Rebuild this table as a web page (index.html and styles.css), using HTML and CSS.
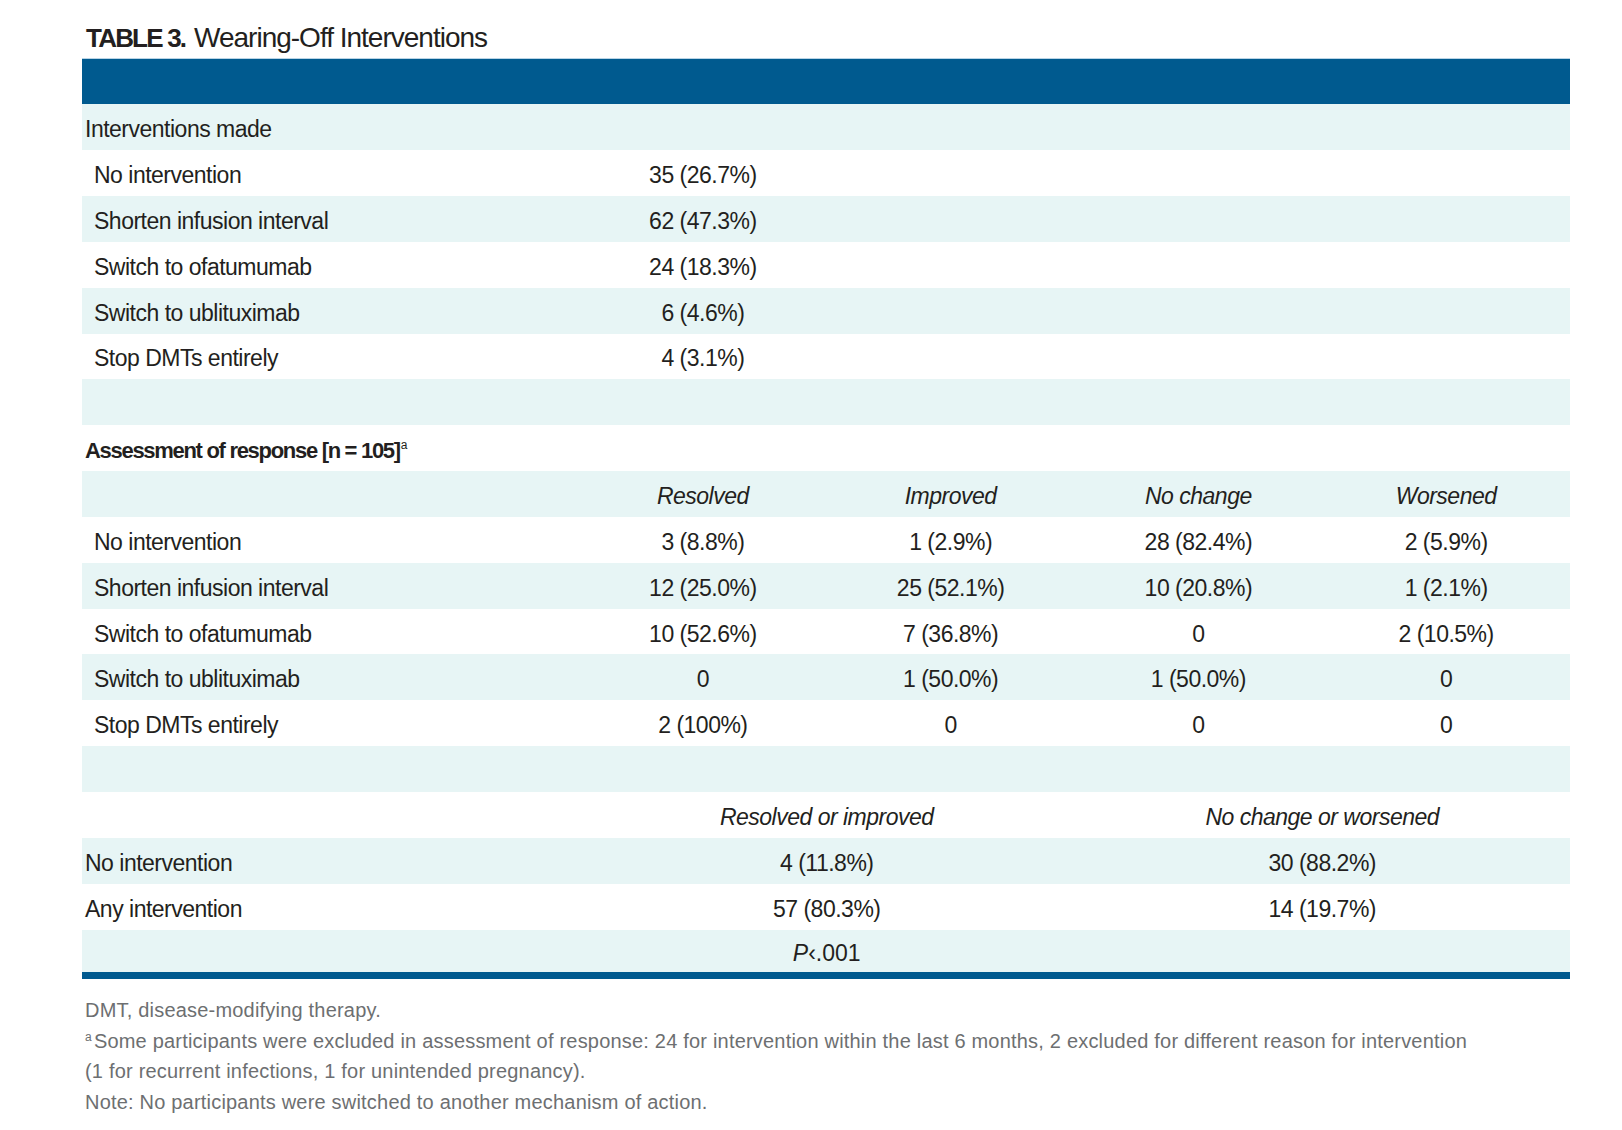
FILE: index.html
```html
<!DOCTYPE html>
<html lang="en">
<head>
<meta charset="utf-8">
<title>Table 3. Wearing-Off Interventions</title>
<link rel="stylesheet" href="styles.css">
</head>
<body>
<div class="page">
  <table class="data">
    <caption class="caption"><b>TABLE 3.</b> Wearing-Off Interventions</caption>
    <colgroup>
      <col class="c-label">
      <col class="c-val">
      <col class="c-val">
      <col class="c-val">
      <col class="c-val">
    </colgroup>
    <thead>
      <tr class="head"><th colspan="5"></th></tr>
    </thead>
    <tbody>
      <tr class="alt"><td class="top" colspan="5">Interventions made</td></tr>
      <tr><td class="sub">No intervention</td><td class="num">35 (26.7%)</td><td colspan="3"></td></tr>
      <tr class="alt"><td class="sub">Shorten infusion interval</td><td class="num">62 (47.3%)</td><td colspan="3"></td></tr>
      <tr><td class="sub">Switch to ofatumumab</td><td class="num">24 (18.3%)</td><td colspan="3"></td></tr>
      <tr class="alt"><td class="sub">Switch to ublituximab</td><td class="num">6 (4.6%)</td><td colspan="3"></td></tr>
      <tr><td class="sub">Stop DMTs entirely</td><td class="num">4 (3.1%)</td><td colspan="3"></td></tr>
      <tr class="alt"><td colspan="5"></td></tr>

      <tr><td class="top section" colspan="5">Assessment of response [n = 105]<sup>a</sup></td></tr>
      <tr class="alt"><td></td><td class="num ital">Resolved</td><td class="num ital">Improved</td><td class="num ital">No change</td><td class="num ital">Worsened</td></tr>
      <tr><td class="sub">No intervention</td><td class="num">3 (8.8%)</td><td class="num">1 (2.9%)</td><td class="num">28 (82.4%)</td><td class="num">2 (5.9%)</td></tr>
      <tr class="alt"><td class="sub">Shorten infusion interval</td><td class="num">12 (25.0%)</td><td class="num">25 (52.1%)</td><td class="num">10 (20.8%)</td><td class="num">1 (2.1%)</td></tr>
      <tr><td class="sub">Switch to ofatumumab</td><td class="num">10 (52.6%)</td><td class="num">7 (36.8%)</td><td class="num">0</td><td class="num">2 (10.5%)</td></tr>
      <tr class="alt"><td class="sub">Switch to ublituximab</td><td class="num">0</td><td class="num">1 (50.0%)</td><td class="num">1 (50.0%)</td><td class="num">0</td></tr>
      <tr><td class="sub">Stop DMTs entirely</td><td class="num">2 (100%)</td><td class="num">0</td><td class="num">0</td><td class="num">0</td></tr>
      <tr class="alt"><td colspan="5"></td></tr>

      <tr><td></td><td class="num ital" colspan="2">Resolved or improved</td><td class="num ital" colspan="2">No change or worsened</td></tr>
      <tr class="alt"><td class="top">No intervention</td><td class="num" colspan="2">4 (11.8%)</td><td class="num" colspan="2">30 (88.2%)</td></tr>
      <tr><td class="top">Any intervention</td><td class="num" colspan="2">57 (80.3%)</td><td class="num" colspan="2">14 (19.7%)</td></tr>
      <tr class="alt"><td></td><td class="num pval" colspan="2"><i>P</i>&lsaquo;.001</td><td colspan="2"></td></tr>
    </tbody>
  </table>

  <div class="notes">
    <p>DMT, disease-modifying therapy.</p>
    <p><sup>a</sup>Some participants were excluded in assessment of response: 24 for intervention within the last 6 months, 2 excluded for different reason for intervention<br>(1 for recurrent infections, 1 for unintended pregnancy).</p>
    <p>Note: No participants were switched to another mechanism of action.</p>
  </div>
</div>
</body>
</html>
```

FILE: styles.css
```css
* {
  box-sizing: border-box;
}

body {
  margin: 0;
  background: #ffffff;
  color: #231f20;
  font-family: "Liberation Sans", Arial, sans-serif;
}

.page {
  padding: 21px 0 0 82px;
}

.data {
  width: 1488px;
  border-collapse: collapse;
  table-layout: fixed;
  font-size: 23px;
  letter-spacing: -0.5px;
  border-bottom: 7px solid #005a8f;
}

.caption {
  caption-side: top;
  text-align: left;
  padding: 0 0 3px 4px;
  font-size: 28px;
  line-height: 34px;
  letter-spacing: -1px;
  font-weight: normal;
  color: #231f20;
}

.caption b {
  font-weight: bold;
  font-size: 26px;
  letter-spacing: -1.8px;
  margin-right: 2px;
}

.c-label {
  width: 497px;
}

.c-val {
  width: 247.75px;
}

.data th,
.data td {
  height: 45.85px;
  padding: 5px 0 0;
  vertical-align: middle;
  font-weight: normal;
  white-space: nowrap;
}

.head th {
  background: #005a8f;
  border-top: 1px solid #b9d4e6;
}

.alt td {
  background: #e7f5f5;
}

.top {
  padding-left: 3px !important;
}

.sub {
  padding-left: 12px !important;
}

.section {
  font-weight: bold !important;
  font-size: 22px;
  letter-spacing: -1.3px;
}

.section sup {
  font-size: 12px;
  font-weight: normal;
  vertical-align: 9px;
  line-height: 0;
  margin-left: 1px;
}

.num {
  text-align: center;
}

.ital {
  font-style: italic;
}

.pval {
  letter-spacing: 0;
}

.notes {
  margin-top: 16px;
  padding-left: 3px;
  color: #6d6f71;
  font-size: 20px;
  line-height: 30.7px;
  letter-spacing: 0.2px;
}

.notes p {
  margin: 0;
}

.notes sup {
  font-size: 12px;
  vertical-align: 7px;
  line-height: 0;
  margin-right: 2px;
}
```
